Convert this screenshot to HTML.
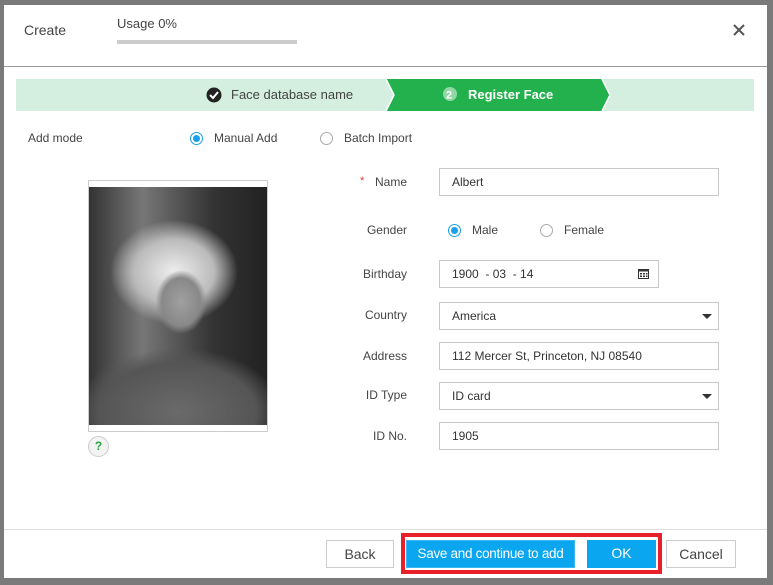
<!DOCTYPE html>
<html><head><style>
*{box-sizing:border-box;margin:0;padding:0}
body{width:773px;height:585px;background:#7a7a7a;font-family:"Liberation Sans",sans-serif;font-size:12px;color:#333;position:relative;overflow:hidden}
.dlg{position:absolute;left:4px;top:5px;width:763px;height:573px;background:#fff}
.a{position:absolute}
.lbl{position:absolute;width:120px;text-align:right;font-size:12px;color:#444}
.in{position:absolute;left:439px;width:280px;height:28px;border:1px solid #c8c8c8;padding-left:12px;line-height:26px;font-size:12px;color:#333}
.radio{position:absolute;width:13px;height:13px;border:1px solid #aaa;border-radius:50%}
.radio.on{border-color:#1aa0e8}
.radio.on::after{content:"";position:absolute;left:2px;top:2px;width:7px;height:7px;border-radius:50%;background:#1aa0e8}
.btn{position:absolute;height:28px;line-height:26px;text-align:center;font-size:14px;white-space:nowrap}
.caret{position:absolute;right:6px;top:11px;border-left:5px solid transparent;border-right:5px solid transparent;border-top:5px solid #333}
</style></head><body>
<div class="dlg"></div>
<div class="a" style="left:24px;top:22px;font-size:14px;color:#444">Create</div>
<div class="a" style="left:117px;top:16px;font-size:13px;color:#444">Usage 0%</div>
<div class="a" style="left:117px;top:40px;width:180px;height:4px;background:#ccc"></div>
<svg class="a" style="left:733px;top:24px" width="12" height="12"><path d="M1 1L11 11M11 1L1 11" stroke="#555" stroke-width="2"/></svg>
<div class="a" style="left:4px;top:66px;width:763px;height:1px;background:#999"></div>
<svg class="a" style="left:16px;top:79px" width="738" height="32">
<rect width="738" height="32" fill="#d4efdf"/>
<polygon points="370,0 586,0 594,16 586,32 370,32 378,16" fill="#22b14c"/>
<polyline points="370,0 378,16 370,32" fill="none" stroke="#fff" stroke-width="1.5"/>
<polyline points="586,0 594,16 586,32" fill="none" stroke="#fff" stroke-width="1.5"/>
<circle cx="198" cy="16" r="7.5" fill="#222"/>
<path d="M194 16 l3 3 l5 -6" stroke="#fff" stroke-width="2" fill="none"/>
<text x="215" y="20" font-family="Liberation Sans" font-size="13" fill="#444">Face database name</text>
<circle cx="434" cy="15" r="7" fill="#8fd8a6"/>
<text x="430" y="19.5" font-family="Liberation Sans" font-size="11" font-weight="bold" fill="#fff">2</text>
<text x="452" y="20" font-family="Liberation Sans" font-size="13" font-weight="bold" fill="#fff">Register Face</text>
</svg>
<div class="a" style="left:28px;top:131px;color:#444">Add mode</div>
<div class="radio on" style="left:190px;top:132px"></div>
<div class="a" style="left:214px;top:131px;color:#444">Manual Add</div>
<div class="radio" style="left:320px;top:132px"></div>
<div class="a" style="left:344px;top:131px;color:#444">Batch Import</div>
<div class="a" style="left:88px;top:180px;width:180px;height:252px;border:1px solid #ccc"></div>
<div class="a" style="left:89px;top:187px;width:178px;height:238px;background:
radial-gradient(ellipse 32px 40px at 92px 115px,#a0a0a0,#888 60%,transparent 80%),
radial-gradient(ellipse 80px 65px at 85px 85px,#eee,#bbb 50%,transparent 80%),
radial-gradient(ellipse 130px 80px at 89px 225px,#6a6a6a,#555 60%,transparent 80%),
linear-gradient(90deg,#333,#777 30%,#333 70%,#222)"></div>
<div class="a" style="left:88px;top:436px;width:21px;height:21px;border-radius:50%;border:1px solid #ccc;background:#f3f3f3;color:#22a93f;font-weight:bold;text-align:center;line-height:19px;font-size:12px">?</div>
<div class="a" style="left:360px;top:175px;color:#e33;font-size:11px">*</div>
<div class="lbl" style="left:287px;top:175px">Name</div>
<div class="in" style="top:168px">Albert</div>
<div class="lbl" style="left:287px;top:223px">Gender</div>
<div class="radio on" style="left:448px;top:224px"></div>
<div class="a" style="left:472px;top:223px;color:#444">Male</div>
<div class="radio" style="left:540px;top:224px"></div>
<div class="a" style="left:564px;top:223px;color:#444">Female</div>
<div class="lbl" style="left:287px;top:267px">Birthday</div>
<div class="in" style="top:260px;width:220px">1900 &nbsp;- 03 &nbsp;- 14
<svg class="a" style="left:198px;top:8px" width="11" height="10"><rect x="0.5" y="0.5" width="10" height="9" fill="none" stroke="#333"/><rect x="0.5" y="0.5" width="10" height="2" fill="#333"/><g fill="#333"><rect x="2" y="4" width="2" height="1.5"/><rect x="5" y="4" width="2" height="1.5"/><rect x="8" y="4" width="1.5" height="1.5"/><rect x="2" y="6.5" width="2" height="1.5"/><rect x="5" y="6.5" width="2" height="1.5"/><rect x="8" y="6.5" width="1.5" height="1.5"/></g></svg></div>
<div class="lbl" style="left:287px;top:308px">Country</div>
<div class="in" style="top:302px">America<span class="caret"></span></div>
<div class="lbl" style="left:287px;top:349px">Address</div>
<div class="in" style="top:342px">112 Mercer St, Princeton, NJ 08540</div>
<div class="lbl" style="left:287px;top:388px">ID Type</div>
<div class="in" style="top:382px">ID card<span class="caret"></span></div>
<div class="lbl" style="left:287px;top:429px">ID No.</div>
<div class="in" style="top:422px">1905</div>
<div class="a" style="left:4px;top:529px;width:763px;height:1px;background:#ddd"></div>
<div class="btn" style="left:326px;top:540px;width:68px;border:1px solid #ccc;color:#444">Back</div>
<div class="a" style="left:401px;top:533px;width:261px;height:41px;border:4px solid #e8202a"></div>
<div class="btn" style="left:406px;top:540px;width:169px;background:#0aa6f0;border:1px solid #3bb8f2;color:#fff;font-size:13.5px;letter-spacing:-0.3px">Save and continue to add</div>
<div class="btn" style="left:587px;top:540px;width:69px;background:#0aa6f0;color:#fff">OK</div>
<div class="btn" style="left:666px;top:540px;width:70px;border:1px solid #ccc;color:#444">Cancel</div>
</body></html>
